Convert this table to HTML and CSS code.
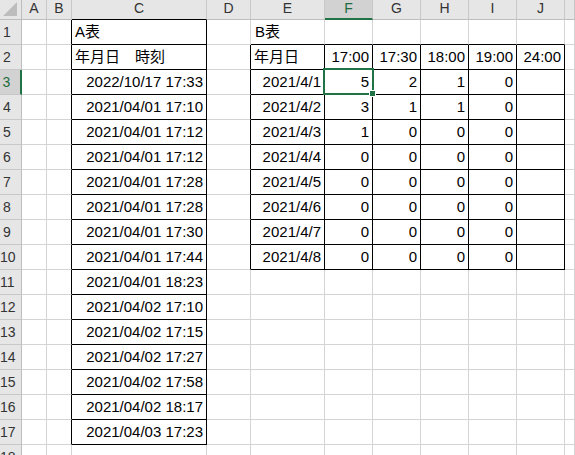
FILE: index.html
```html
<!DOCTYPE html>
<html lang="ja">
<head>
<meta charset="utf-8">
<title>Sheet</title>
<link rel="stylesheet" href="styles.css">
</head>
<body>
<div class="sheet">
  <!-- header row -->
  <div class="corner"><svg width="22" height="20" viewBox="0 0 22 20"><polygon points="17,2 17,16 3,16" fill="#bdbdbd"/></svg></div>
  <div class="hd">A</div><div class="hd">B</div><div class="hd hb">C</div><div class="hd">D</div><div class="hd">E</div><div class="hd sel">F</div><div class="hd">G</div><div class="hd">H</div><div class="hd">I</div><div class="hd">J</div><div class="hd"></div>

  <!-- row 1 -->
  <div class="rh">1</div><div class="c"></div><div class="c br"></div><div class="c br bb">A表</div><div class="c"></div><div class="c bb pl">B表</div><div class="c bb"></div><div class="c bb"></div><div class="c bb"></div><div class="c bb"></div><div class="c bb"></div><div class="c"></div>
  <!-- row 2 -->
  <div class="rh">2</div><div class="c"></div><div class="c br"></div><div class="c br bb">年月日　時刻</div><div class="c br"></div><div class="c br bb">年月日</div><div class="c br bb r">17:00</div><div class="c br bb r">17:30</div><div class="c br bb r">18:00</div><div class="c br bb r">19:00</div><div class="c br bb r">24:00</div><div class="c"></div>
  <!-- row 3 -->
  <div class="rh sel">3</div><div class="c"></div><div class="c br"></div><div class="c br bb r">2022/10/17 17:33</div><div class="c br"></div><div class="c br bb r">2021/4/1</div><div class="c br bb r">5</div><div class="c br bb r">2</div><div class="c br bb r">1</div><div class="c br bb r">0</div><div class="c br bb"></div><div class="c"></div>
  <!-- row 4 -->
  <div class="rh">4</div><div class="c"></div><div class="c br"></div><div class="c br bb r">2021/04/01 17:10</div><div class="c br"></div><div class="c br bb r">2021/4/2</div><div class="c br bb r">3</div><div class="c br bb r">1</div><div class="c br bb r">1</div><div class="c br bb r">0</div><div class="c br bb"></div><div class="c"></div>
  <!-- row 5 -->
  <div class="rh">5</div><div class="c"></div><div class="c br"></div><div class="c br bb r">2021/04/01 17:12</div><div class="c br"></div><div class="c br bb r">2021/4/3</div><div class="c br bb r">1</div><div class="c br bb r">0</div><div class="c br bb r">0</div><div class="c br bb r">0</div><div class="c br bb"></div><div class="c"></div>
  <!-- row 6 -->
  <div class="rh">6</div><div class="c"></div><div class="c br"></div><div class="c br bb r">2021/04/01 17:12</div><div class="c br"></div><div class="c br bb r">2021/4/4</div><div class="c br bb r">0</div><div class="c br bb r">0</div><div class="c br bb r">0</div><div class="c br bb r">0</div><div class="c br bb"></div><div class="c"></div>
  <!-- row 7 -->
  <div class="rh">7</div><div class="c"></div><div class="c br"></div><div class="c br bb r">2021/04/01 17:28</div><div class="c br"></div><div class="c br bb r">2021/4/5</div><div class="c br bb r">0</div><div class="c br bb r">0</div><div class="c br bb r">0</div><div class="c br bb r">0</div><div class="c br bb"></div><div class="c"></div>
  <!-- row 8 -->
  <div class="rh">8</div><div class="c"></div><div class="c br"></div><div class="c br bb r">2021/04/01 17:28</div><div class="c br"></div><div class="c br bb r">2021/4/6</div><div class="c br bb r">0</div><div class="c br bb r">0</div><div class="c br bb r">0</div><div class="c br bb r">0</div><div class="c br bb"></div><div class="c"></div>
  <!-- row 9 -->
  <div class="rh">9</div><div class="c"></div><div class="c br"></div><div class="c br bb r">2021/04/01 17:30</div><div class="c br"></div><div class="c br bb r">2021/4/7</div><div class="c br bb r">0</div><div class="c br bb r">0</div><div class="c br bb r">0</div><div class="c br bb r">0</div><div class="c br bb"></div><div class="c"></div>
  <!-- row 10 -->
  <div class="rh">10</div><div class="c"></div><div class="c br"></div><div class="c br bb r">2021/04/01 17:44</div><div class="c br"></div><div class="c br bb r">2021/4/8</div><div class="c br bb r">0</div><div class="c br bb r">0</div><div class="c br bb r">0</div><div class="c br bb r">0</div><div class="c br bb"></div><div class="c"></div>
  <!-- row 11 -->
  <div class="rh">11</div><div class="c"></div><div class="c br"></div><div class="c br bb r">2021/04/01 18:23</div><div class="c"></div><div class="c"></div><div class="c"></div><div class="c"></div><div class="c"></div><div class="c"></div><div class="c"></div><div class="c"></div>
  <!-- row 12 -->
  <div class="rh">12</div><div class="c"></div><div class="c br"></div><div class="c br bb r">2021/04/02 17:10</div><div class="c"></div><div class="c"></div><div class="c"></div><div class="c"></div><div class="c"></div><div class="c"></div><div class="c"></div><div class="c"></div>
  <!-- row 13 -->
  <div class="rh">13</div><div class="c"></div><div class="c br"></div><div class="c br bb r">2021/04/02 17:15</div><div class="c"></div><div class="c"></div><div class="c"></div><div class="c"></div><div class="c"></div><div class="c"></div><div class="c"></div><div class="c"></div>
  <!-- row 14 -->
  <div class="rh">14</div><div class="c"></div><div class="c br"></div><div class="c br bb r">2021/04/02 17:27</div><div class="c"></div><div class="c"></div><div class="c"></div><div class="c"></div><div class="c"></div><div class="c"></div><div class="c"></div><div class="c"></div>
  <!-- row 15 -->
  <div class="rh">15</div><div class="c"></div><div class="c br"></div><div class="c br bb r">2021/04/02 17:58</div><div class="c"></div><div class="c"></div><div class="c"></div><div class="c"></div><div class="c"></div><div class="c"></div><div class="c"></div><div class="c"></div>
  <!-- row 16 -->
  <div class="rh">16</div><div class="c"></div><div class="c br"></div><div class="c br bb r">2021/04/02 18:17</div><div class="c"></div><div class="c"></div><div class="c"></div><div class="c"></div><div class="c"></div><div class="c"></div><div class="c"></div><div class="c"></div>
  <!-- row 17 -->
  <div class="rh">17</div><div class="c"></div><div class="c br"></div><div class="c br bb r">2021/04/03 17:23</div><div class="c"></div><div class="c"></div><div class="c"></div><div class="c"></div><div class="c"></div><div class="c"></div><div class="c"></div><div class="c"></div>
  <!-- row 18 -->
  <div class="rh">18</div><div class="c"></div><div class="c"></div><div class="c"></div><div class="c"></div><div class="c"></div><div class="c"></div><div class="c"></div><div class="c"></div><div class="c"></div><div class="c"></div><div class="c"></div>

  <div class="selection"><span class="handle"></span></div>
</div>
</body>
</html>
```

FILE: styles.css
```css
html, body {
  margin: 0;
  padding: 0;
  background: #ffffff;
  overflow: hidden;
}

.sheet {
  position: relative;
  display: grid;
  grid-template-columns: 22px 25px 25px 135px 44px 74px 48px 48px 48px 48px 48px 10px;
  grid-template-rows: 20px repeat(18, 25px);
  width: 575px;
  height: 455px;
  overflow: hidden;
  font-family: "Liberation Sans", "Noto Sans CJK JP", sans-serif;
  color: #000000;
}

.sheet > div {
  box-sizing: border-box;
}

.corner {
  background: #e6e6e6;
  border-right: 1px solid #bdbdbd;
  border-bottom: 1px solid #bdbdbd;
}

.corner svg {
  display: block;
}

.hd {
  background: #e6e6e6;
  border-right: 1px solid #c8c8c8;
  border-bottom: 1px solid #bdbdbd;
  font-size: 14px;
  line-height: 14px;
  padding-top: 1px;
  text-align: center;
  color: #333333;
}

.hd.hb {
  border-bottom-color: #000000;
}

.hd.sel {
  background: #d2d2d2;
  color: #1e6b40;
  border-bottom: 2px solid #217346;
}

.rh {
  background: #e6e6e6;
  border-right: 1px solid #bdbdbd;
  border-bottom: 1px solid #c8c8c8;
  font-size: 14px;
  line-height: 24px;
  padding-right: 7px;
  text-align: center;
  color: #333333;
}

.rh.sel {
  background: #d2d2d2;
  color: #1e6b40;
  border-right: 2px solid #217346;
}

.c {
  border-right: 1px solid #d4d4d4;
  border-bottom: 1px solid #d4d4d4;
  font-size: 15px;
  line-height: 24px;
  padding: 0 3px;
  white-space: nowrap;
  overflow: hidden;
}

.c.r {
  text-align: right;
}

.c.pl {
  padding-left: 4px;
}

.c.br {
  border-right-color: #000000;
}

.c.bb {
  border-bottom-color: #000000;
}

.selection {
  position: absolute;
  left: 323px;
  top: 68px;
  width: 51px;
  height: 27px;
  box-sizing: border-box;
  border: 2px solid #217346;
  pointer-events: none;
}

.handle {
  position: absolute;
  right: -4px;
  bottom: -4px;
  width: 5px;
  height: 5px;
  background: #217346;
  border: 1px solid #ffffff;
}
```
